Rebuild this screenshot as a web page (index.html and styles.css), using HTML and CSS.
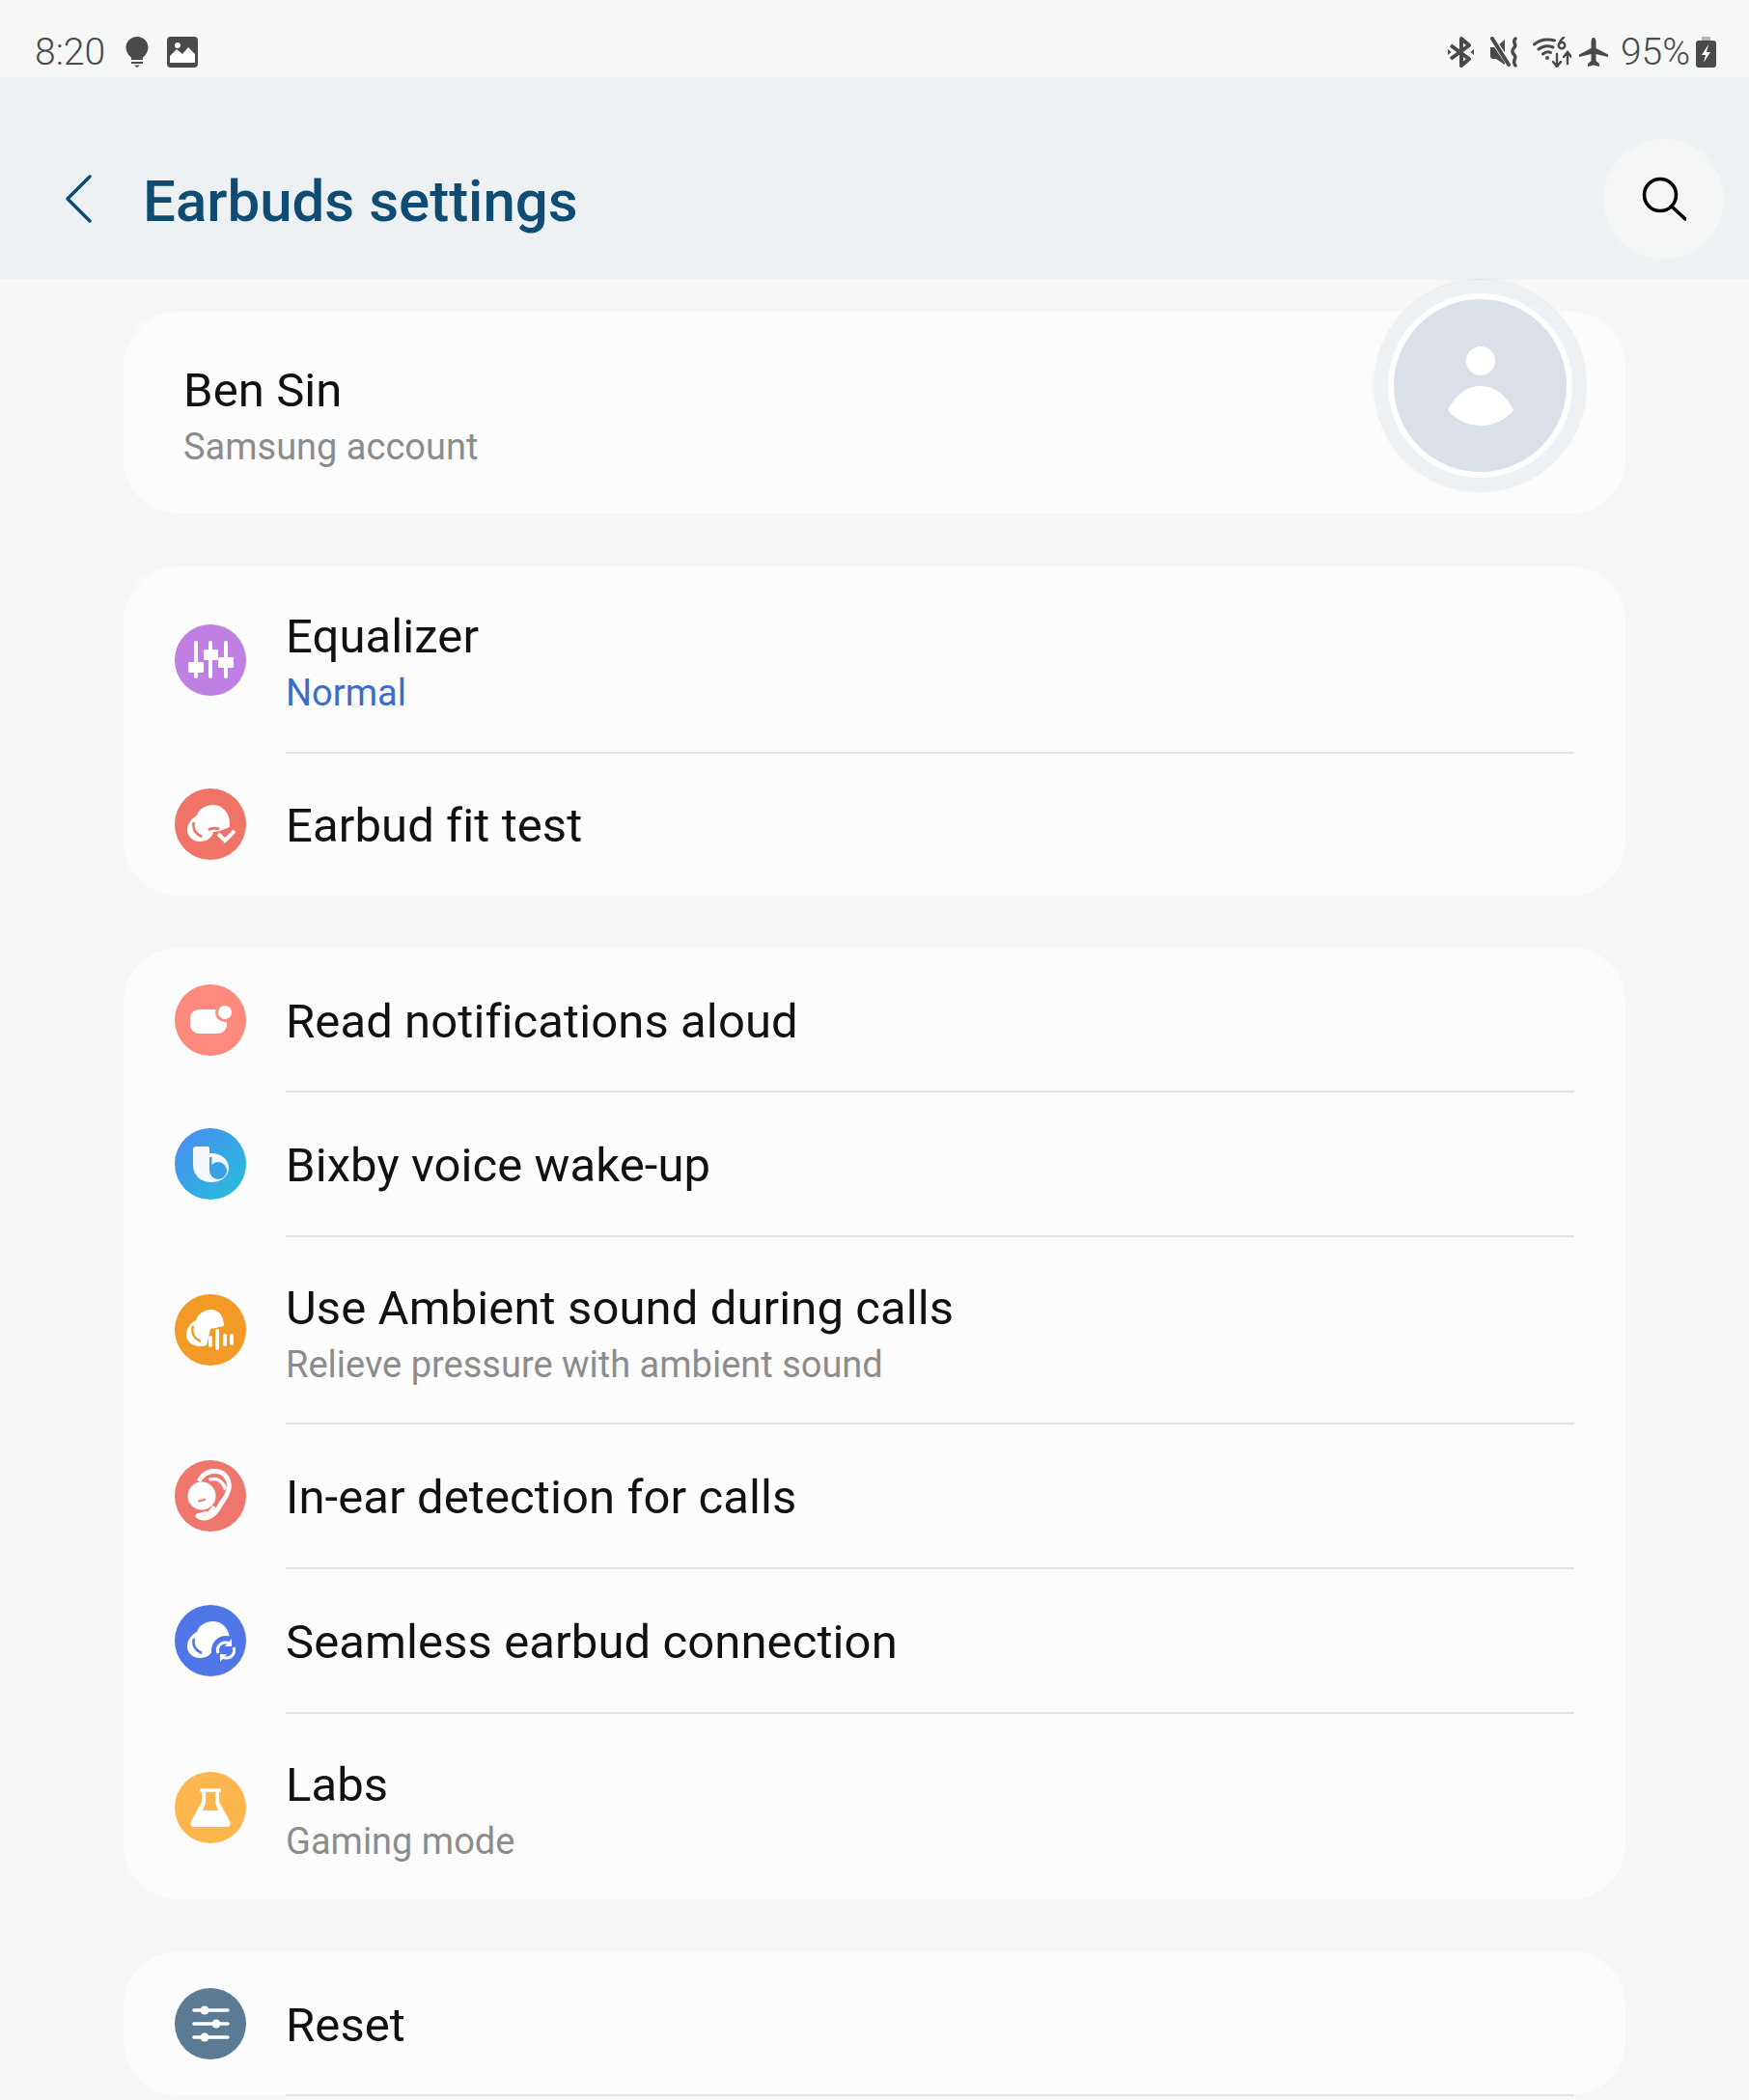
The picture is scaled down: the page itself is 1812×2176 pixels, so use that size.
FILE: index.html
```html
<!DOCTYPE html>
<html lang="en">
<head>
<meta charset="utf-8">
<title>Earbuds settings</title>
<link rel="stylesheet" href="styles.css">
</head>
<body>
<div class="status">
  <div class="status-left">
    <span class="clock">8:20</span>
    <svg class="si bulb" viewBox="0 0 24 32"><path d="M12 0C5.400 0 .5 5 .5 11.200c0 4.300 2.400 7.800 5.500 10.300V24h12v-2.500c3.100-2.500 5.500-6 5.500-10.300C23.500 5 18.600 0 12 0z" fill="#4a4a4a"/><path d="M6 26h12v2H6zM9 29.500h6l-3 2.500z" fill="#4a4a4a"/></svg>
    <svg class="si pic" viewBox="0 0 32 32"><rect width="32" height="32" rx="4" fill="#4a4a4a"/><path d="M3 27v-7l7-7 6 5 6-7 7 7v9z" fill="#fff"/><circle cx="11" cy="9" r="3" fill="#fff"/></svg>
  </div>
  <div class="status-right">
    <svg class="si bt" viewBox="0 0 27 32" fill="none" stroke="#4a4a4a" stroke-width="4" stroke-linejoin="round"><path d="M3 9l19 14-8 7V2l8 7L3 23"/><path d="M0 13v6l3.500-3zM27 13v6l-3.500-3z" fill="#4a4a4a" stroke="none"/></svg>
    <svg class="si mute" viewBox="0 0 29 32"><path d="M0 11h6l9-8v26l-9-6H3a3 3 0 0 1-3-3z" fill="#4a4a4a"/><path d="M1 1l19 28" stroke="#f6f7f7" stroke-width="6"/><path d="M2 2l17 27" stroke="#4a4a4a" stroke-width="4" stroke-linecap="round"/><path d="M26 2c-4 4 2 6-1 9s-3 5 0 8-3 6 1 11" fill="none" stroke="#4a4a4a" stroke-width="3.500" stroke-linecap="round"/></svg>
    <svg class="si wifi" viewBox="0 0 40 32" fill="none" stroke="#4a4a4a" stroke-width="3" stroke-linecap="round"><path d="M1.500 8c6-5 13-6 21-4M6 13c5-4 10-4 15-2M10.500 18c3-2.500 6-2.500 8-1.500"/><circle cx="15" cy="22" r="2" fill="#4a4a4a" stroke="none"/><circle cx="30" cy="9" r="3.300" stroke-width="2.400"/><path d="M32 1c-2 1-3.500 3-4 6" stroke-width="2.400"/><path d="M25 18v12M21 26l4 5 4-5M36 28V17M32 21l4-5 4 5" stroke-width="2.400"/></svg>
    <svg class="si plane" viewBox="0 0 30 32"><path d="M15 1c1.500 0 2.500 2 2.500 4.500V12L30 18.500V21l-12.500-3v7l3.500 3v3l-6-1.500L9 31v-3l3.500-3v-7L0 21v-2.500L12.500 12V5.500C12.500 3 13.500 1 15 1z" fill="#4a4a4a"/></svg>
    <span class="pct">95%</span>
    <svg class="si batt" viewBox="0 0 21 32"><path d="M6 0h9v5H6z" fill="#b5b5b5"/><rect y="4" width="21" height="28" rx="3" fill="#4a4a4a"/><path d="M13 8l-7 11h4l-2 8 7-11h-4z" fill="#fff"/></svg>
  </div>
</div>

<header class="appbar">
  <svg class="back" viewBox="0 0 28 50" fill="none"><path d="M26 2L3 25l23 23" stroke="#0e4c73" stroke-width="3.500" stroke-linecap="round" stroke-linejoin="round"/></svg>
  <h1 class="title">Earbuds settings</h1>
  <div class="search">
    <svg class="search-icon" viewBox="0 0 46 46" fill="none" stroke="#000" stroke-width="3.600" stroke-linecap="round"><circle cx="19" cy="19" r="16.500"/><path d="M31 31l14 13"/></svg>
  </div>
</header>

<main class="list">
  <section class="card account">
    <div class="name">Ben Sin</div>
    <div class="sub">Samsung account</div>
    <div class="avatar">
      <div class="avatar-ring">
        <svg class="avatar-person" viewBox="0 0 68 82" fill="#fff"><circle cx="34" cy="15" r="15"/><path d="M0 66C8 50 20 41 34 41s26 9 34 25C60 76 47 82 34 82S8 76 0 66z"/></svg>
      </div>
    </div>
  </section>

  <section class="card">
    <div class="row two">
      <svg class="ic" viewBox="0 0 74 74"><circle cx="37" cy="37" r="37" fill="#bf7fe3"/><g fill="#fff"><rect x="20" y="17" width="4" height="39" rx="2"/><rect x="35" y="17" width="4" height="39" rx="2"/><rect x="51" y="17" width="4" height="39" rx="2"/><rect x="14" y="39" width="16" height="11" rx="1.500"/><rect x="30" y="26" width="15" height="11" rx="1.500"/><rect x="45" y="34" width="16" height="11" rx="1.500"/></g></svg>
      <div class="body"><div class="t">Equalizer</div><div class="sub blue">Normal</div></div>
    </div>
    <div class="row last">
      <svg class="ic" viewBox="0 0 74 74"><circle cx="37" cy="37" r="37" fill="#ef7467"/><path d="M23 28C25 21 32 17 40 17c10 0 17 9 17 19v4l-10 4-7 1c-1 6-7 10-14 10-8 0-13-6-13-12s4-12 10-15z" fill="#fff"/><path d="M20 35c-2 6 1 12 8 15" fill="none" stroke="#ef7467" stroke-width="2.500"/><path d="M35 43c3-2 7-2 11-1" fill="none" stroke="#ef7467" stroke-width="3"/><path d="M45 47l7 7 10-10" fill="none" stroke="#ef7467" stroke-width="10"/><path d="M45 47l7 7 10-10" fill="none" stroke="#fff" stroke-width="4"/></svg>
      <div class="body"><div class="t">Earbud fit test</div></div>
    </div>
  </section>

  <section class="card">
    <div class="row first">
      <svg class="ic" viewBox="0 0 74 74"><circle cx="37" cy="37" r="37" fill="#fe8a7e"/><rect x="16" y="26" width="38" height="25" rx="9" fill="#fff"/><circle cx="52" cy="29" r="10" fill="#fe8a7e"/><circle cx="52" cy="29" r="7" fill="#fff"/></svg>
      <div class="body"><div class="t">Read notifications aloud</div></div>
    </div>
    <div class="row">
      <svg class="ic" viewBox="0 0 74 74"><defs><linearGradient id="bx" x1="0" y1="0" x2="1" y2="1"><stop offset="0" stop-color="#4b8af2"/><stop offset="1" stop-color="#25c0da"/></linearGradient></defs><circle cx="37" cy="37" r="37" fill="url(#bx)"/><path d="M19 22a3 3 0 0 1 3-3h12a2 2 0 0 1 2 2v5c11-1 20 6 20 15 0 9-8 15-18 15-11 0-19-7-19-18z" fill="#f3f8fc"/><rect x="36" y="30" width="2.500" height="14" fill="#3a9fe6"/><circle cx="45" cy="44" r="9" fill="#3a9fe6"/></svg>
      <div class="body"><div class="t">Bixby voice wake-up</div></div>
    </div>
    <div class="row two mid">
      <svg class="ic" viewBox="0 0 74 74"><circle cx="37" cy="37" r="37" fill="#f29a25"/><path d="M22 27C24 20 31 16 38 16c8 0 13 7 13 17L37 36l-4 17c-3 1-5 1-7 1-8 0-14-5-14-12 0-6 4-12 10-15z" fill="#fff"/><path d="M19 33c-2 7 1 13 8 16" fill="none" stroke="#f29a25" stroke-width="2.500"/><g fill="#fff"><rect x="35" y="43" width="4" height="12" rx="2"/><rect x="42" y="36" width="4" height="22" rx="2"/><rect x="50" y="41" width="4" height="13" rx="2"/><rect x="57" y="41" width="4" height="12" rx="2"/></g></svg>
      <div class="body"><div class="t">Use Ambient sound during calls</div><div class="sub">Relieve pressure with ambient sound</div></div>
    </div>
    <div class="row">
      <svg class="ic" viewBox="0 0 74 74"><circle cx="37" cy="37" r="37" fill="#ef766c"/><path d="M26 20C33 9 48 9 54 18c5 8 1 18-4 24-5 7-6 13-13 16-5 3-10 2-13 0" fill="none" stroke="#fff" stroke-width="5" stroke-linecap="round"/><path d="M24 58c3-3 8-3 12-3l5-7" fill="none" stroke="#fff" stroke-width="4"/><circle cx="28" cy="37" r="14.500" fill="#fff"/><path d="M25 42.500l6-1.500" stroke="#ef766c" stroke-width="2" stroke-linecap="round"/><path d="M37 20c7-2 13 2 15 9" fill="none" stroke="#fff" stroke-width="3.500" stroke-linecap="round"/></svg>
      <div class="body"><div class="t">In-ear detection for calls</div></div>
    </div>
    <div class="row">
      <svg class="ic" viewBox="0 0 74 74"><circle cx="37" cy="37" r="37" fill="#5077e8"/><path d="M23 28C25 21 32 17 40 17c10 0 17 9 17 19v4l-10 4-7 1c-1 6-7 10-14 10-8 0-13-6-13-12s4-12 10-15z" fill="#fff"/><path d="M20 35c-2 6 1 12 8 15" fill="none" stroke="#5077e8" stroke-width="2.500"/><circle cx="53" cy="47" r="15" fill="#5077e8"/><g fill="none" stroke="#fff" stroke-width="3"><path d="M45 50c-2-5 1-11 8-11 1 0 2 0 3 .5"/><path d="M61 44c2 5-1 11-8 11-1 0-2 0-3-.5"/></g><path d="M59 35v8h-7zM47 59v-8h7z" fill="#fff"/></svg>
      <div class="body"><div class="t">Seamless earbud connection</div></div>
    </div>
    <div class="row two last">
      <svg class="ic" viewBox="0 0 74 74"><circle cx="37" cy="37" r="37" fill="#fdb64d"/><path d="M26 19h22" stroke="#fff" stroke-width="3.500"/><path d="M28 19v12L17 51c-1.500 3 0 6 3 6h34c3 0 4.500-3 3-6L46 31V19h-4v13l3 8H29l3-8V19z" fill="#fff"/></svg>
      <div class="body"><div class="t">Labs</div><div class="sub">Gaming mode</div></div>
    </div>
  </section>

  <section class="card">
    <div class="row first">
      <svg class="ic" viewBox="0 0 74 74"><circle cx="37" cy="37" r="37" fill="#5b7b95"/><g stroke="#fff" stroke-width="3.500" stroke-linecap="round"><path d="M20 23h35M20 37h35M20 51h35"/></g><g fill="#fff"><circle cx="31" cy="23" r="4.500"/><circle cx="43" cy="37" r="4.500"/><circle cx="31" cy="51" r="4.500"/></g></svg>
      <div class="body"><div class="t">Reset</div></div>
    </div>
  </section>
</main>
</body>
</html>
```

FILE: styles.css
```css
* { box-sizing: border-box; }
html, body { margin: 0; padding: 0; }
body {
  width: 1812px;
  height: 2176px;
  overflow: hidden;
  background: #f7f7f7;
  font-family: Roboto, "Liberation Sans", sans-serif;
  color: #111;
}
.status {
  height: 80px;
  display: flex;
  justify-content: space-between;
  align-items: center;
  padding: 28px 34px 0 36px;
  background: #f6f7f7;
  color: #4a4a4a;
}
.status-left, .status-right { display: flex; align-items: center; }
.clock { font-size: 39px; font-weight: 300; margin-right: 21px; }
.si { display: block; height: 32px; }
.pic { margin-left: 19px; width: 32px; }
.bulb { width: 24px; }
.bt { width: 27px; margin-right: 17px; }
.mute { width: 29px; margin-right: 15px; }
.wifi { width: 40px; margin-right: 8px; }
.plane { width: 30px; margin-right: 13px; }
.pct { font-size: 39px; font-weight: 300; margin-right: 6px; }
.batt { width: 21px; }
.appbar {
  height: 210px;
  background: #edf1f4;
  display: flex;
  align-items: center;
  padding: 42px 26px 0 67px;
}
.back { width: 28px; height: 50px; flex: none; }
.title {
  flex: 1;
  margin: 4px 0 0 53px;
  font-size: 60px;
  font-weight: 500;
  color: #0e4c73;
}
.search {
  width: 125px;
  height: 125px;
  border-radius: 50%;
  background: #f4f5f5;
  display: flex;
  align-items: center;
  justify-content: center;
}
.search-icon { width: 46px; height: 46px; }
.list {
  padding: 33px 128px 0 128px;
  display: flex;
  flex-direction: column;
  gap: 54px;
}
.card {
  background: #fcfcfc;
  border-radius: 56px;
  padding: 0 53px;
}
.account {
  position: relative;
  height: 209px;
  margin-bottom: 1px;
  padding: 54px 62px 0;
}
.name { font-size: 49px; line-height: 56px; letter-spacing: .1px; }
.sub { font-size: 38px; line-height: 46px; color: #8c8c8c; margin-top: 7px; }
.blue { color: #3c6cc6; }
.avatar {
  position: absolute;
  left: 1296px;
  top: -33px;
  width: 219px;
  height: 219px;
  border-radius: 50%;
  background: #edf1f4;
  box-shadow: 0 0 3px rgba(0,0,0,.12);
  display: flex;
  align-items: center;
  justify-content: center;
}
.avatar-ring {
  width: 191px;
  height: 191px;
  border-radius: 50%;
  border: 6px solid #fff;
  background: #dbe0e8;
  display: flex;
  align-items: center;
  justify-content: center;
}
.avatar-person { width: 68px; height: 82px; }
.row {
  display: flex;
  align-items: center;
  height: 150px;
  position: relative;
}
.row.first { height: 149px; }
.row.two { height: 193px; }
.row.last { height: 148px; }
.row.two.last { height: 193px; padding-top: 3px; }
.row.two.mid { height: 194px; }
.row::after {
  content: "";
  position: absolute;
  left: 115px;
  right: 0;
  bottom: -1px;
  height: 2px;
  background: #e3e3e3;
}
.row.last::after { display: none; }
.ic { width: 74px; height: 74px; flex: none; }
.body { margin: 4px 0 0 41px; }
.two .body { margin-top: 6px; }
.two.mid .body { margin-top: 9px; }
.t { font-size: 49px; line-height: 56px; letter-spacing: .1px; color: #111; }
```
